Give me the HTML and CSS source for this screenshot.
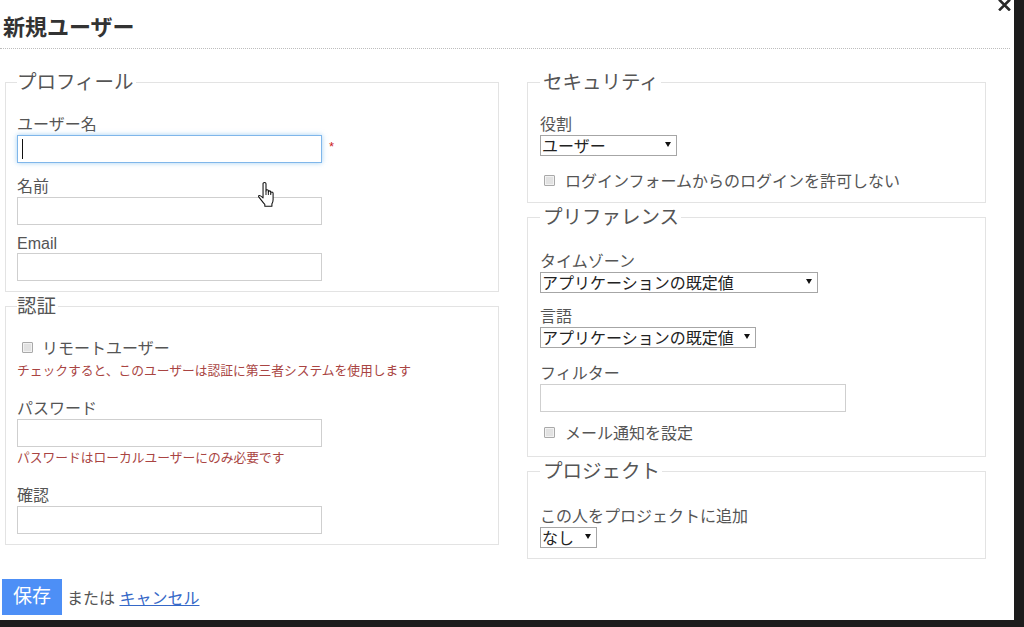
FILE: index.html
```html
<!DOCTYPE html>
<html lang="ja">
<head>
<meta charset="utf-8">
<title>新規ユーザー</title>
<link rel="stylesheet" href="styles.css">
</head>
<body>
<div class="dialog">
  <h1 class="title">新規ユーザー</h1>
  <svg class="close" width="13" height="12" viewBox="0 0 13 12" aria-label="閉じる"><path d="M2 1.5 L11 10.5 M11 1.5 L2 10.5" stroke="#2a2a2a" stroke-width="2.6" stroke-linecap="square"/></svg>
  <form class="form">
    <div class="columns">
      <div class="col col-left">
        <fieldset class="box">
          <legend>プロフィール</legend>
          <div class="row">
            <label class="lbl">ユーザー名</label>
            <div class="req-wrap">
              <input type="text" class="text is-focused">
              <span class="caret"></span>
              <span class="req">*</span>
            </div>
          </div>
          <div class="row">
            <label class="lbl">名前</label>
            <input type="text" class="text">
          </div>
          <div class="row">
            <label class="lbl">Email</label>
            <input type="text" class="text">
          </div>
        </fieldset>
        <fieldset class="box">
          <legend>認証</legend>
          <div class="row">
            <div class="check-row">
              <input type="checkbox" class="chk">
              <span class="check-text">リモートユーザー</span>
            </div>
            <p class="help help-after-check">チェックすると、このユーザーは認証に第三者システムを使用します</p>
          </div>
          <div class="row">
            <label class="lbl">パスワード</label>
            <input type="password" class="text">
            <p class="help">パスワードはローカルユーザーにのみ必要です</p>
          </div>
          <div class="row">
            <label class="lbl">確認</label>
            <input type="password" class="text">
          </div>
        </fieldset>
      </div>
      <div class="col col-right">
        <fieldset class="box">
          <legend>セキュリティ</legend>
          <div class="row row-select">
            <label class="lbl">役割</label>
            <span class="select-wrap"><select class="sel w-role"><option>ユーザー</option></select></span>
          </div>
          <div class="row">
            <div class="check-row">
              <input type="checkbox" class="chk">
              <span class="check-text">ログインフォームからのログインを許可しない</span>
            </div>
          </div>
        </fieldset>
        <fieldset class="box box-pref">
          <legend>プリファレンス</legend>
          <div class="row">
            <label class="lbl">タイムゾーン</label>
            <span class="select-wrap"><select class="sel w-tz"><option>アプリケーションの既定値</option></select></span>
          </div>
          <div class="row row-select">
            <label class="lbl">言語</label>
            <span class="select-wrap"><select class="sel w-lang"><option>アプリケーションの既定値</option></select></span>
          </div>
          <div class="row row-tight">
            <label class="lbl">フィルター</label>
            <input type="text" class="text text-wide">
          </div>
          <div class="row">
            <div class="check-row">
              <input type="checkbox" class="chk">
              <span class="check-text">メール通知を設定</span>
            </div>
          </div>
        </fieldset>
        <fieldset class="box box-loose">
          <legend>プロジェクト</legend>
          <div class="row row-select">
            <label class="lbl">この人をプロジェクトに追加</label>
            <span class="select-wrap"><select class="sel w-none"><option>なし</option></select></span>
          </div>
        </fieldset>
      </div>
    </div>
    <div class="actions">
      <button type="button" class="btn">保存</button>
      <span class="or">または <a href="#">キャンセル</a></span>
    </div>
  </form>
  <svg class="pointer" width="18" height="26" viewBox="0 0 15 22" aria-hidden="true">
    <path d="M5 1.5 Q5 0.5 6.25 0.5 Q7.5 0.5 7.5 1.5 V7.5 Q7.5 6.5 8.5 6.5 Q9.5 6.5 9.5 7.5 V8.5 Q9.5 7.5 10.5 7.5 Q11.5 7.5 11.5 8.5 V9.5 Q11.5 8.5 12.5 8.5 Q13.5 8.5 13.5 9.5 V15 Q13.5 17 12.5 18.5 V20.5 H6.5 V19 Q5.5 18 4 16 L1.5 12.8 Q0.8 11.8 1.8 11.5 Q2.8 11.3 5 13.5 Z" fill="#fff" stroke="#111" stroke-width="0.9" stroke-linejoin="round"/>
    <path d="M7.5 7.5 V11 M9.5 8.5 V11 M11.5 9.5 V11" stroke="#111" stroke-width="0.8" fill="none"/>
  </svg>
</div>
</body>
</html>
```

FILE: styles.css
```css
* {
  box-sizing: border-box;
}

html,
body {
  margin: 0;
  padding: 0;
}

body {
  width: 1024px;
  height: 627px;
  overflow: hidden;
  background: #1c1c1c;
  font-family: "Liberation Sans", "Noto Sans CJK JP", sans-serif;
  font-size: 16px;
  color: #555;
}

.dialog {
  position: relative;
  width: 1014px;
  height: 620px;
  background: #fff;
}

.title {
  width: 1010px;
  height: 49px;
  margin: 0;
  padding: 15px 0 0 3px;
  font-size: 22px;
  line-height: 26px;
  font-weight: bold;
  color: #333;
  border-bottom: 1px dotted #bdbdbd;
}

.close {
  position: absolute;
  left: 998px;
  top: -1px;
}

.form {
  margin: 0;
}

.columns {
  display: flex;
  align-items: flex-start;
  gap: 28px;
  padding-left: 5px;
  margin-top: 22px;
}

.col {
  display: flex;
  flex-direction: column;
  gap: 3px;
}

.col-left {
  width: 494px;
}

.col-right {
  width: 459px;
}

.box {
  margin: 0;
  min-width: 0;
  padding: 18px 11px 10px;
  border: 1px solid #e3e3e3;
}

.col-right .box {
  padding-left: 12px;
}

.col-right .box-pref {
  padding-top: 20px;
  padding-bottom: 12px;
}

.col-right .box-loose {
  padding-top: 21px;
}

.box legend {
  padding: 0 2px 0 0;
  font-size: 19.5px;
  line-height: 22px;
  color: #555;
}

.col-right .box legend {
  padding-left: 3px;
}

.row {
  margin-bottom: 10px;
}

.row:last-child {
  margin-bottom: 0;
}

.row-select {
  margin-bottom: 12px;
}

.row-tight {
  margin-bottom: 8px;
}

.lbl {
  display: block;
  color: #555;
}

.text {
  display: block;
  width: 305px;
  height: 28px;
  margin: 0;
  padding: 0 4px;
  border: 1px solid #cfcfcf;
  border-radius: 0;
  background: #fff;
  font: inherit;
  color: #333;
  outline: none;
}

.text-wide {
  width: 306px;
}

.text.is-focused {
  border-color: #7fb6ea;
  box-shadow: 0 0 5px rgba(102, 175, 233, 0.6);
}

.req-wrap {
  position: relative;
  display: flex;
  align-items: flex-start;
}

.caret {
  position: absolute;
  left: 5px;
  top: 4px;
  width: 1px;
  height: 20px;
  background: #111;
}

.req {
  margin-left: 7px;
  padding-top: 5px;
  font-size: 13px;
  line-height: 13px;
  color: #cc2222;
}

.select-wrap {
  position: relative;
  display: block;
  width: max-content;
}

.select-wrap::after {
  content: "";
  position: absolute;
  right: 6px;
  top: 7px;
  border-left: 3px solid transparent;
  border-right: 3px solid transparent;
  border-top: 5px solid #111;
}

.sel {
  display: block;
  appearance: none;
  -webkit-appearance: none;
  height: 21px;
  margin: 0;
  padding: 1px 0 0 1px;
  border: 1px solid #a6a6a6;
  border-radius: 0;
  background: #fff;
  font-family: "Liberation Sans", "Noto Sans CJK JP", sans-serif;
  font-size: 16px;
  line-height: 19px;
  color: #222;
}

.w-role {
  width: 137px;
}

.w-tz {
  width: 278px;
}

.w-lang {
  width: 216px;
}

.w-none {
  width: 57px;
}

.check-row {
  display: flex;
  align-items: center;
}

.chk {
  appearance: none;
  -webkit-appearance: none;
  flex: none;
  width: 11px;
  height: 11px;
  margin: 0 9px 0 5px;
  border: 1px solid #a9a9a9;
  border-radius: 1px;
  background: #e2e2e2;
  box-shadow: inset 0 0 0 1px #f2f2f2;
}

.col-right .chk {
  margin: 0 10px 0 4px;
}

.check-text {
  color: #555;
}

.help {
  margin: 0 0 16px;
  font-size: 12.75px;
  color: #a94442;
}

.help-after-check {
  margin-top: 1px;
}

.actions {
  display: flex;
  align-items: center;
  margin-top: 20px;
  padding-left: 2px;
}

.btn {
  height: 36px;
  margin: 0 5px 0 0;
  padding: 0 11px;
  border: 0;
  border-radius: 0;
  background: #4d8ff6;
  color: #fff;
  font-family: "Liberation Sans", "Noto Sans CJK JP", sans-serif;
  font-size: 19px;
  line-height: 36px;
}

.or {
  color: #555;
  font-size: 16px;
}

.or a {
  color: #3568c8;
  text-decoration: underline;
}

.pointer {
  position: absolute;
  left: 257px;
  top: 182px;
}
```
